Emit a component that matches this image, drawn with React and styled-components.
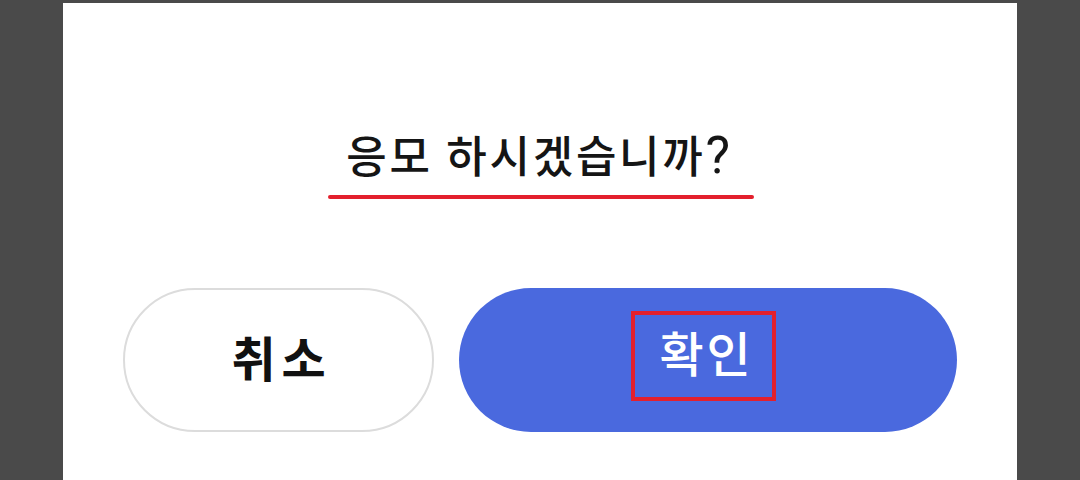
import React from 'react'
import styled, { createGlobalStyle } from 'styled-components'

const GlobalStyle = createGlobalStyle`
  html, body {
    margin: 0;
    padding: 0;
    background: #4a4a4a;
    font-family: Roboto, 'Noto Sans CJK KR', 'Noto Sans', sans-serif;
    overflow: hidden;
  }
`

const Panel = styled.div`
  margin: 3px 63px 0;
  height: 477px;
  background: #fff;
  padding: 124px 60px 0;
  box-sizing: border-box;
  display: flex;
  flex-direction: column;
  align-items: center;
`

const Title = styled.h1`
  margin: 0 0 0 2px;
  padding: 0 21px 0 18px;
  font-size: 44px;
  font-weight: 500;
  color: #151515;
  line-height: 1.45;
  letter-spacing: 2.7px;

  &::after {
    content: '';
    display: block;
    height: 4px;
    margin: 4px -21px 0 -18px;
    border-radius: 2px;
    background: #e3202d;
  }
`

const Question = styled.span`
  font-size: 1.18em;
  font-weight: 400;
  line-height: 0;
`

const Buttons = styled.div`
  align-self: stretch;
  display: grid;
  grid-template-columns: 5fr 8fr;
  gap: 25px;
  margin-top: 89px;
`

const Button = styled.button`
  height: 144px;
  border-radius: 72px;
  box-sizing: border-box;
  border: ${p => (p.$primary ? 'none' : '2px solid #dcdcdc')};
  background: ${p => (p.$primary ? '#4a69de' : '#fff')};
  color: ${p => (p.$primary ? '#fff' : '#111')};
  font-family: inherit;
  font-size: 48px;
  font-weight: ${p => (p.$primary ? 500 : 700)};
  letter-spacing: ${p => (p.$primary ? 3 : 6)}px;
  display: flex;
  align-items: center;
  justify-content: center;
  padding: 0 0 8px ${p => (p.$primary ? 0 : 6)}px;
  cursor: pointer;
`

const Marked = styled.span`
  border: 4px solid #e3202d;
  margin-right: 9px;
  padding: 6px 18px 6px 24px;
  line-height: 1.45;
`

export default function App() {
  return (
    <>
      <GlobalStyle />
      <Panel>
        <Title>
          응모 하시겠습니까<Question>?</Question>
        </Title>
        <Buttons>
          <Button>취소</Button>
          <Button $primary>
            <Marked>확인</Marked>
          </Button>
        </Buttons>
      </Panel>
    </>
  )
}
